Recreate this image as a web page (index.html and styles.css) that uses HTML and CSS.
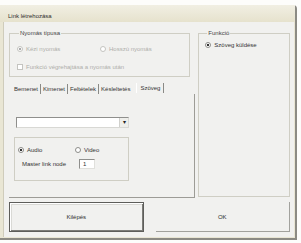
FILE: index.html
```html
<!DOCTYPE html>
<html lang="hu">
<head>
    <meta charset="UTF-8">
    <title>Link létrehozása</title>
    <link rel="stylesheet" href="styles.css">
</head>
<body>
    <div class="window">
        <div class="titlebar">Link létrehozása</div>
        <div class="content">
            <div class="main-row">
                <div class="left-col">
                    <fieldset class="group press-group">
                        <legend>Nyomás típusa</legend>
                        <div class="opt-row">
                            <span class="opt disabled wide"><span class="radio checked"></span>Kézi nyomás</span>
                            <span class="opt disabled"><span class="radio"></span>Hosszú nyomás</span>
                        </div>
                        <div class="opt-row second">
                            <span class="opt disabled"><span class="check"></span>Funkció végrehajtása a nyomás után</span>
                        </div>
                    </fieldset>

                    <div class="tabs">
                        <span class="tab">Bemenet</span>
                        <span class="tab">Kimenet</span>
                        <span class="tab">Feltételek</span>
                        <span class="tab no-sep">Késleltetés</span>
                        <span class="tab active">Szöveg</span>
                    </div>

                    <div class="tab-panel">
                        <div class="select">
                            <span class="select-btn">▾</span>
                        </div>
                        <div class="group media-group">
                            <div class="opt-row">
                                <span class="opt media"><span class="radio checked"></span>Audio</span>
                                <span class="opt"><span class="radio"></span>Video</span>
                            </div>
                            <div class="node-row">
                                <span class="node-label">Master link node</span>
                                <span class="input">1</span>
                            </div>
                        </div>
                    </div>
                </div>

                <fieldset class="group func-group">
                    <legend>Funkció</legend>
                    <div class="opt-row">
                        <span class="opt"><span class="radio checked"></span>Szöveg küldése</span>
                    </div>
                </fieldset>
            </div>

            <div class="buttons">
                <button class="btn default">Kilépés</button>
                <button class="btn">OK</button>
            </div>
        </div>
    </div>
</body>
</html>
```

FILE: styles.css
```css
* {
    margin: 0;
    padding: 0;
    box-sizing: border-box;
}

body {
    background-color: #fdfdfb;
    font-family: "Liberation Sans", Arial, sans-serif;
    font-size: 6px;
    color: #333;
}

.window {
    margin-top: 5px;
    width: 297px;
    height: 235px;
    background-color: #e9e6d4;
    border-right: 2px solid #8c8b84;
    border-bottom: 2px solid #8c8b84;
    border-top-right-radius: 4px;
    display: flex;
    flex-direction: column;
}

.titlebar {
    height: 17px;
    padding: 7px 0 0 8px;
    background: linear-gradient(#f1efe3, #e6e2cd);
    color: #2e2e2e;
    line-height: 8px;
}

.content {
    flex: 1;
    margin: 0 1px 1px 3px;
    padding: 7px 4px 0 5px;
    background-color: #f1f1ef;
    border-left: 1px solid #cfccbb;
}

.main-row {
    display: flex;
    gap: 3px;
}

.left-col {
    width: 187px;
}

.group {
    border: 1px solid #cfcec4;
    min-width: 0;
}

.group legend {
    margin-left: 2px;
    padding: 0 1px;
    line-height: 8px;
    color: #444;
}

.press-group {
    margin-right: 5px;
    padding: 8px 0 5px 7px;
}

.opt-row {
    display: flex;
    height: 8px;
    align-items: center;
}

.opt-row.second {
    margin-top: 10px;
}

.opt {
    display: flex;
    align-items: center;
    gap: 3px;
    line-height: 8px;
}

.opt.wide {
    width: 83px;
}

.opt.disabled {
    color: #aeaeaa;
}

.radio {
    display: inline-block;
    width: 6px;
    height: 6px;
    border: 1px solid #8d8d8a;
    border-radius: 50%;
    background-color: #fff;
}

.radio.checked {
    background: radial-gradient(circle, #333 0, #333 1px, #fff 1.6px);
}

.disabled .radio {
    border-color: #c4c4c0;
}

.disabled .radio.checked {
    background: radial-gradient(circle, #aaa 0, #aaa 1px, #fff 1.6px);
}

.check {
    display: inline-block;
    width: 6px;
    height: 6px;
    border: 1px solid #c4c4c0;
    background-color: #fff;
}

.tabs {
    display: flex;
    height: 10px;
    margin-top: 7px;
    padding-left: 5px;
    align-items: center;
}

.tab {
    padding-right: 2px;
    margin-right: 2px;
    line-height: 10px;
    border-right: 1px solid #8a8a86;
}

.tab.no-sep {
    border-right: none;
    margin-right: 4px;
}

.tab.active {
    margin-top: -2px;
    padding: 0 3px;
    border-left: 1px solid #fff;
    border-right: 1px solid #8a8a86;
}

.tab-panel {
    height: 104px;
    padding: 23px 0 0 5px;
    border-right: 1px solid #9d9c96;
    border-bottom: 1px solid #9d9c96;
}

.select {
    display: flex;
    justify-content: flex-end;
    width: 113px;
    height: 11px;
    margin-left: 2px;
    border: 1px solid #8f8f8c;
    border-right-color: #d8d8d4;
    border-bottom-color: #d8d8d4;
    background-color: #fff;
}

.select-btn {
    width: 9px;
    height: 9px;
    font-size: 6px;
    line-height: 9px;
    text-align: center;
    color: #222;
    background-color: #eeeeea;
    border-left: 1px solid #d0d0cc;
}

.media-group {
    width: 115px;
    height: 44px;
    margin-top: 9px;
    padding: 8px 0 0 3px;
}

.opt.media {
    width: 57px;
}

.node-row {
    display: flex;
    align-items: center;
    height: 10px;
    margin-top: 5px;
    padding-left: 4px;
}

.node-label {
    width: 57px;
}

.input {
    width: 16px;
    height: 10px;
    padding-left: 3px;
    line-height: 8px;
    border: 1px solid #8f8f8c;
    border-right-color: #e0e0dc;
    border-bottom-color: #e0e0dc;
    background-color: #fff;
}

.func-group {
    width: 92px;
    height: 168px;
    padding: 4px 0 0 6px;
}

.buttons {
    display: flex;
    gap: 12px;
    margin-top: 4px;
}

.btn {
    width: 135px;
    height: 30px;
    font-family: inherit;
    font-size: 6px;
    color: #2e2e2e;
    background-color: #f1f1ef;
    border: none;
    border-right: 1px solid #a2a29d;
    border-bottom: 1px solid #a2a29d;
}

.btn.default {
    border: 1px solid #5d5d5a;
    box-shadow: inset 1px 1px #fff, inset -1px -1px #7c7c78, inset 2px 2px #d9d9d5;
}
```
